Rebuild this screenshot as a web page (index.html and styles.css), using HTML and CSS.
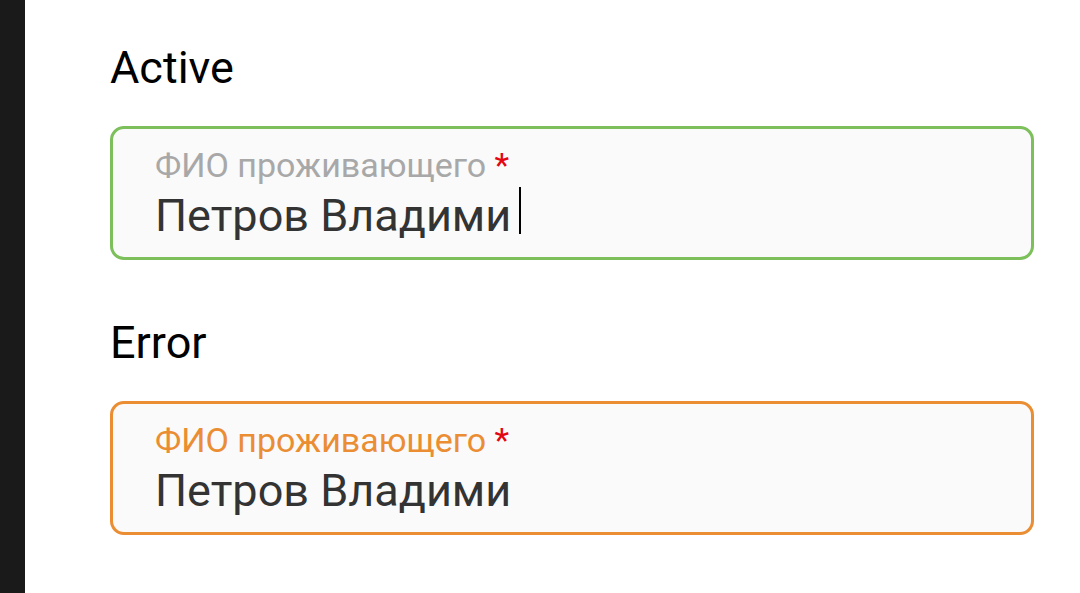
FILE: index.html
```html
<!DOCTYPE html>
<html lang="ru">
<head>
    <meta charset="UTF-8">
    <meta name="viewport" content="width=device-width, initial-scale=1.0">
    <title>Text field states</title>
    <link rel="stylesheet" href="styles.css">
</head>
<body>
    <div class="sidebar"></div>
    <main class="states">
        <section class="state">
            <h2 class="state-title">Active</h2>
            <div class="field field-active">
                <div class="field-label">ФИО проживающего <span class="required">*</span></div>
                <div class="field-value">Петров Владими<span class="caret"></span></div>
            </div>
        </section>
        <section class="state">
            <h2 class="state-title">Error</h2>
            <div class="field field-error">
                <div class="field-label">ФИО проживающего <span class="required">*</span></div>
                <div class="field-value">Петров Владими</div>
            </div>
        </section>
    </main>
</body>
</html>
```

FILE: styles.css
```css
body {
    font-family: Roboto, 'Noto Sans', sans-serif;
    background-color: #ffffff;
    margin: 0;
    padding: 0;
    height: 593px;
    overflow: hidden;
    display: flex;
}

/* dark strip on the left edge */
.sidebar {
    width: 25px;
    flex-shrink: 0;
    background-color: #1a1a1a;
}

.states {
    flex: 1;
    padding: 42px 48px 0 85px;
    display: flex;
    flex-direction: column;
    gap: 57px;
}

.state {
    display: flex;
    flex-direction: column;
    gap: 32px;
}

.state-title {
    margin: 0;
    font-size: 45px;
    line-height: 52px;
    font-weight: 400;
    color: #000000;
}

.field {
    height: 134px;
    box-sizing: border-box;
    border: 3px solid #7cbf5b;
    border-radius: 14px;
    background-color: #fafafa;
    padding: 18px 42px 0 42px;
    margin-right: -2px;
}

.field-error {
    border-color: #ea8d33;
}

.field-label {
    font-size: 34px;
    line-height: 36px;
    color: #a8a8a8;
}

.field-error .field-label {
    color: #ea8d33;
}

.required {
    color: #e30613;
}

.field-value {
    margin-top: 5px;
    font-size: 45px;
    line-height: 56px;
    color: #333333;
    display: flex;
    align-items: flex-start;
}

/* text cursor in the focused field */
.caret {
    width: 2px;
    height: 47px;
    margin: -1px 0 0 8px;
    background-color: #000000;
}
```
